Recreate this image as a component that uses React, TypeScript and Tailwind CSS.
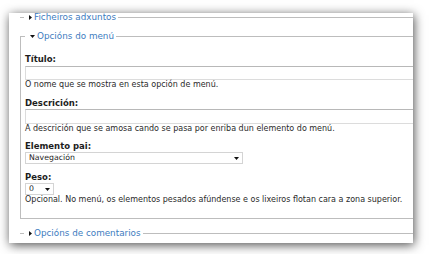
const font = { fontFamily: '"DejaVu Sans", Verdana, sans-serif' };

function Arrow({ open }: { open?: boolean }) {
  return open ? (
    <svg width="5" height="3" viewBox="0 0 5 3" className="shrink-0">
      <path d="M0 0h5L2.5 3z" fill="#111" />
    </svg>
  ) : (
    <svg width="3" height="5" viewBox="0 0 3 5" className="shrink-0">
      <path d="M0 0v5l3-2.5z" fill="#111" />
    </svg>
  );
}

function Legend({ text, open }: { text: string; open?: boolean }) {
  return (
    <legend className="pl-[5px] pr-[2px]">
      <span className="flex items-center gap-[2px] h-[12px] leading-[12px] text-[8.8px] text-[#3d7cc0]">
        <Arrow open={open} />
        {text}
      </span>
    </legend>
  );
}

function Collapsed({ text }: { text: string }) {
  return (
    <fieldset className="ml-[11px] w-[440px] border-t border-[#bdbdbd] pl-[4px]">
      <Legend text={text} />
    </fieldset>
  );
}

function Label({ children, className = "" }: { children: string; className?: string }) {
  return (
    <div className={`text-[8.5px] font-bold leading-[12px] text-[#1d1d1d] ${className}`}>
      {children}
    </div>
  );
}

function Desc({ children }: { children: string }) {
  return <div className="text-[8px] leading-[10px] text-[#2a2a2a]">{children}</div>;
}

function Select({ value, width }: { value: string; width: string }) {
  return (
    <div
      className={`flex items-center justify-between h-[12px] ${width} border border-[#d4d4d4] bg-white pl-[3px] pr-[3px] text-[7.8px] text-[#222]`}
    >
      <span>{value}</span>
      <svg width="5" height="3" viewBox="0 0 5 3">
        <path d="M0 0h5L2.5 3z" fill="#111" />
      </svg>
    </div>
  );
}

export default function App() {
  return (
    <div className="w-[429px] h-[254px] bg-white pt-[13px] pl-[9px]" style={font}>
      <div className="w-[404px] h-[230px] overflow-hidden bg-white shadow-[1px_2px_10px_rgba(0,0,0,0.7)]">
        <div className="mt-[-2px]">
          <Collapsed text="Ficheiros adxuntos" />
        </div>

        <fieldset className="mt-[7px] ml-[11px] w-[440px] border border-[#bdbdbd] pl-[4px] pb-[13px]">
          <Legend text="Opcións do menú" open />
          <Label className="mt-[11px]">Título:</Label>
          <div className="mt-[1px] h-[14px] border border-[#dcdcdc] border-t-[#b8b8b8] bg-white" />
          <Desc>O nome que se mostra en esta opción de menú.</Desc>

          <Label className="mt-[7px]">Descrición:</Label>
          <div className="h-[15px] border border-[#dcdcdc] border-t-[#b8b8b8] bg-white" />
          <Desc>A descrición que se amosa cando se pasa por enriba dun elemento do menú.</Desc>

          <Label className="mt-[6px]">Elemento pai:</Label>
          <Select value="Navegación" width="w-[218px]" />

          <Label className="mt-[7px]">Peso:</Label>
          <Select value="0" width="w-[29px]" />
          <Desc>Opcional. No menú, os elementos pesados afúndense e os lixeiros flotan cara a zona superior.</Desc>
        </fieldset>

        <div className="mt-[8px]">
          <Collapsed text="Opcións de comentarios" />
        </div>
      </div>
    </div>
  );
}
